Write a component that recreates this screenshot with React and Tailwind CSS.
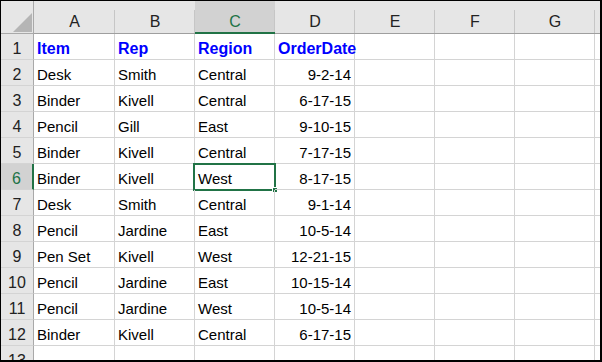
const rows = [
  ['Item', 'Rep', 'Region', 'OrderDate'],
  ['Desk', 'Smith', 'Central', '9-2-14'],
  ['Binder', 'Kivell', 'Central', '6-17-15'],
  ['Pencil', 'Gill', 'East', '9-10-15'],
  ['Binder', 'Kivell', 'Central', '7-17-15'],
  ['Binder', 'Kivell', 'West', '8-17-15'],
  ['Desk', 'Smith', 'Central', '9-1-14'],
  ['Pencil', 'Jardine', 'East', '10-5-14'],
  ['Pen Set', 'Kivell', 'West', '12-21-15'],
  ['Pencil', 'Jardine', 'East', '10-15-14'],
  ['Pencil', 'Jardine', 'West', '10-5-14'],
  ['Binder', 'Kivell', 'Central', '6-17-15'],
  ['', '', '', ''],
];

const cols = ['A', 'B', 'C', 'D', 'E', 'F', 'G'];

function ColHeader({ label, selected, wide }) {
  return (
    <div
      className={`relative shrink-0 h-[33px] text-center text-[16px] leading-[18px] pt-[12px] ${wide ? 'w-[81px]' : 'w-[80px]'} ${
        selected ? 'bg-[#d2d2d2] text-[#217346] border-b-2 border-[#217346]' : 'text-[#222] border-b border-[#9f9f9f]'
      }`}
    >
      {label}
      <span className="absolute right-0 top-[9px] bottom-0 w-px bg-[#c6c6c6]" />
    </div>
  );
}

function Cell({ children, wide, right, bold, selected }) {
  return (
    <div
      className={`relative shrink-0 h-[26px] border-r border-b border-[#d4d4d4] pt-[4px] leading-[21px] whitespace-nowrap ${
        wide ? 'w-[81px]' : 'w-[80px]'
      } ${right ? 'text-right pr-[3px]' : 'pl-[3px]'} ${bold ? 'font-bold text-[16px] text-[#0000ff]' : 'text-[15px] text-black'}`}
    >
      {children}
      {selected && (
        <div className="absolute -left-[2px] -top-[1px] w-[83px] h-[28px] border-2 border-[#217346]">
          <div className="absolute -right-[4px] -bottom-[4px] w-[6px] h-[6px] bg-[#217346] border border-white" />
        </div>
      )}
    </div>
  );
}

export default function App() {
  return (
    <div className="w-[602px] h-[362px] overflow-hidden bg-white border-t border-l border-r-2 border-b-2 border-black font-['Liberation_Sans',Arial,sans-serif]">
      <div className="flex bg-[#e6e6e6]">
        <div className="relative shrink-0 w-[33px] h-[33px] border-b border-r border-[#a9a9a9]">
          <svg className="absolute left-[12px] top-[12px]" width="19" height="19" viewBox="0 0 19 19">
            <polygon points="19,0 19,19 0,19" fill="#b5b5b5" />
          </svg>
        </div>
        {cols.map((c, i) => (
          <ColHeader key={c} label={c} wide={i === 0} selected={c === 'C'} />
        ))}
        <div className="flex-1 h-[33px] border-b border-[#9f9f9f]" />
      </div>
      {rows.map((r, ri) => {
        const sel = ri === 5;
        return (
          <div key={ri} className="flex">
            <div
              className={`shrink-0 w-[33px] h-[26px] border-b border-[#d4d4d4] text-center text-[16px] pt-[4px] leading-[21px] ${
                sel ? 'bg-[#d2d2d2] text-[#217346] border-r-2 border-r-[#217346]' : 'bg-[#e6e6e6] text-[#222] border-r border-r-[#a9a9a9]'
              }`}
            >
              {ri + 1}
            </div>
            {cols.map((c, ci) => (
              <Cell key={c} wide={ci === 0} right={ci === 3 && ri > 0} bold={ri === 0 && ci < 4} selected={sel && ci === 2}>
                {ci < 4 ? r[ci] : ''}
              </Cell>
            ))}
            <div className="flex-1 h-[26px] border-b border-[#d4d4d4]" />
          </div>
        );
      })}
    </div>
  );
}
